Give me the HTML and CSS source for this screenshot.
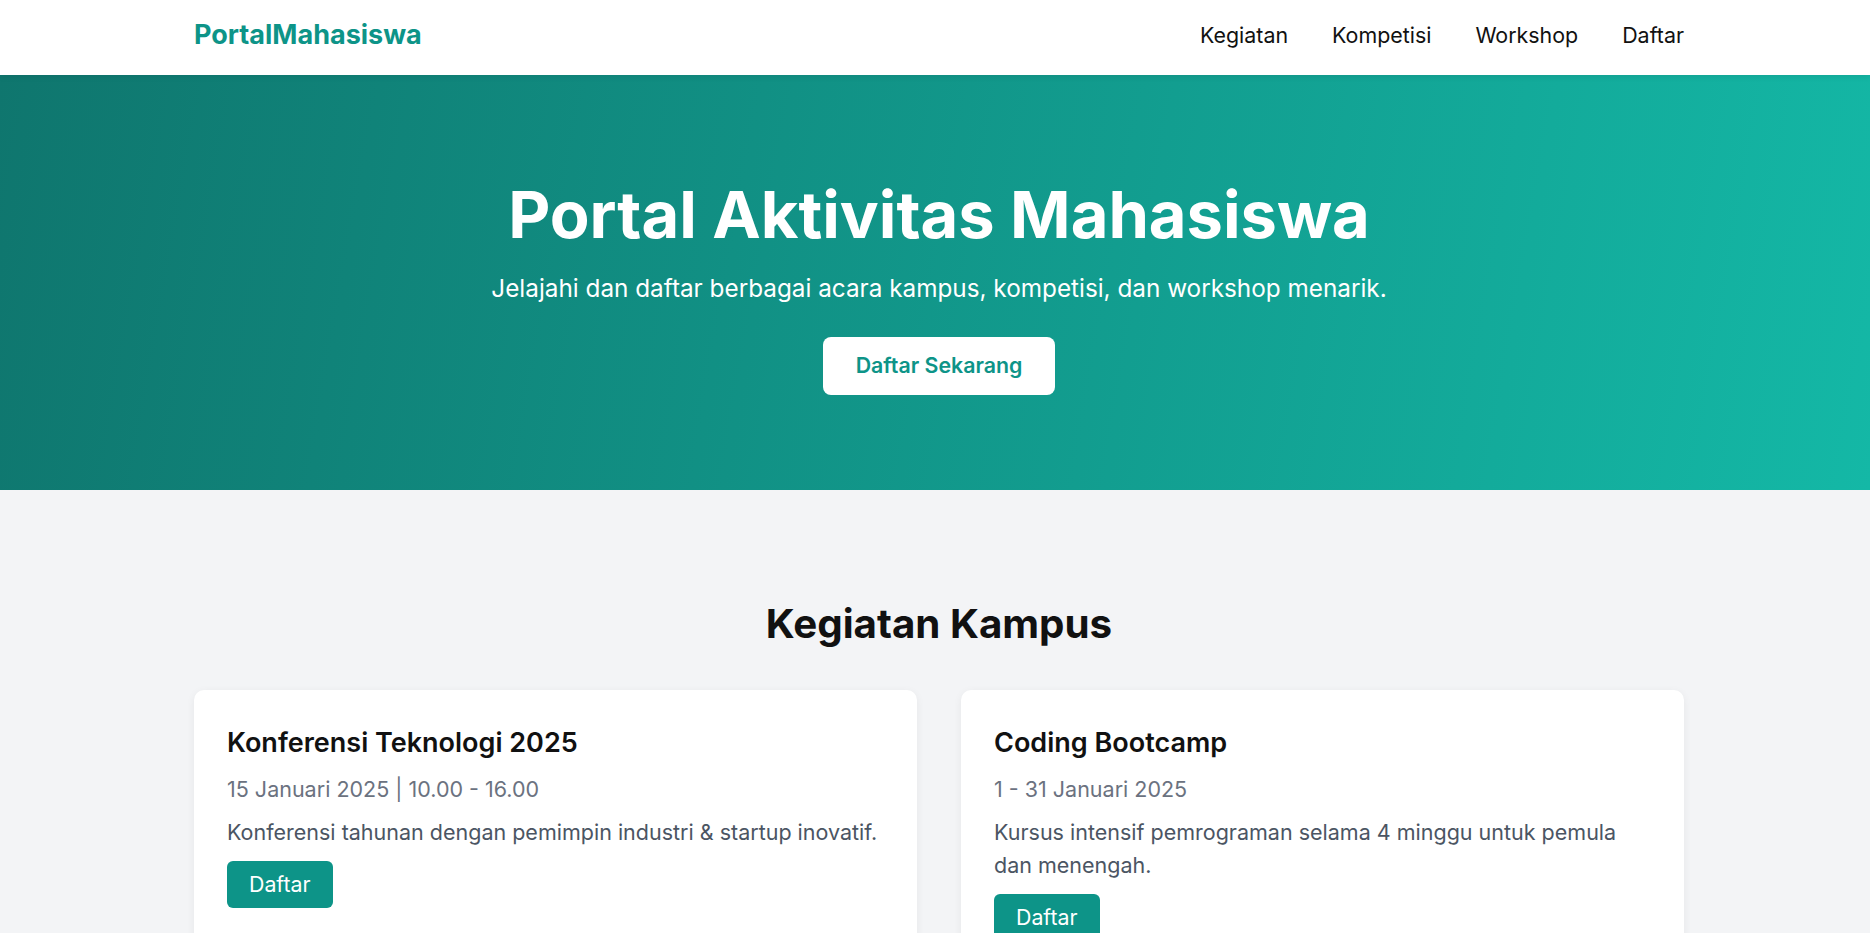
FILE: index.html
```html
<!DOCTYPE html>
<html lang="id">
<head>
<meta charset="utf-8">
<title>Portal Mahasiswa</title>
<link rel="stylesheet" href="styles.css">
</head>
<body>
<header class="navbar">
  <div class="inner nav-inner">
    <a class="logo" href="#">PortalMahasiswa</a>
    <nav class="nav-links">
      <a href="#">Kegiatan</a>
      <a href="#">Kompetisi</a>
      <a href="#">Workshop</a>
      <a href="#">Daftar</a>
    </nav>
  </div>
</header>

<section class="hero">
  <div class="inner hero-inner">
    <h1 class="hero-title">Portal Aktivitas Mahasiswa</h1>
    <p class="hero-sub">Jelajahi dan daftar berbagai acara kampus, kompetisi, dan workshop menarik.</p>
    <a class="hero-btn" href="#">Daftar Sekarang</a>
  </div>
</section>

<main class="section">
  <div class="inner">
    <h2 class="section-title">Kegiatan Kampus</h2>
    <div class="cards">
      <article class="card">
        <h3 class="card-title">Konferensi Teknologi 2025</h3>
        <p class="card-date">15 Januari 2025 | 10.00 - 16.00</p>
        <p class="card-desc">Konferensi tahunan dengan pemimpin industri &amp; startup inovatif.</p>
        <a class="card-btn" href="#">Daftar</a>
      </article>
      <article class="card">
        <h3 class="card-title">Coding Bootcamp</h3>
        <p class="card-date">1 - 31 Januari 2025</p>
        <p class="card-desc">Kursus intensif pemrograman selama 4 minggu untuk pemula dan menengah.</p>
        <a class="card-btn" href="#">Daftar</a>
      </article>
      <article class="card">
        <h3 class="card-title">Seminar Karier</h3>
        <p class="card-date">20 Februari 2025 | 09.00 - 12.00</p>
        <p class="card-desc">Tips dan strategi membangun karier bersama para profesional.</p>
        <a class="card-btn" href="#">Daftar</a>
      </article>
      <article class="card">
        <h3 class="card-title">Hackathon Kampus</h3>
        <p class="card-date">5 - 6 Maret 2025</p>
        <p class="card-desc">Kompetisi 24 jam membangun solusi digital untuk kampus.</p>
        <a class="card-btn" href="#">Daftar</a>
      </article>
    </div>
  </div>
</main>
</body>
</html>
```

FILE: styles.css
```css
* {
  box-sizing: border-box;
}

html, body {
  margin: 0;
  padding: 0;
}

body {
  font-family: Inter, "Noto Sans", "Liberation Sans", sans-serif;
  background: #f3f4f6;
  color: #111111;
}

a {
  text-decoration: none;
}

.inner {
  max-width: 1498px;
  margin: 0 auto;
  padding-left: 8px;
}

/* NAVBAR */
.navbar {
  background: #ffffff;
  height: 75px;
  position: relative;
  z-index: 2;
  box-shadow: 0 2px 6px rgba(0, 0, 0, 0.08);
}

.nav-inner {
  height: 100%;
  display: flex;
  align-items: center;
  justify-content: space-between;
  padding-bottom: 6px;
}

.logo {
  font-size: 27px;
  font-weight: 700;
  color: #0d9488;
  line-height: 40px;
}

.nav-links {
  display: flex;
  gap: 44px;
}

.nav-links a {
  font-size: 21.4px;
  color: #111111;
  line-height: 32px;
}

/* HERO */
.hero {
  background: linear-gradient(100deg, #0f766e 0%, #14b8a6 100%);
  color: #ffffff;
  padding: 101px 0 95px;
}

.hero-inner {
  display: flex;
  flex-direction: column;
  align-items: center;
  text-align: center;
}

.hero-title {
  margin: 0;
  font-size: 65px;
  font-weight: 700;
  line-height: 77px;
}

.hero-sub {
  margin: 19px 0 0;
  font-size: 24.3px;
  line-height: 33px;
}

.hero-btn {
  margin-top: 32px;
  display: inline-block;
  background: #ffffff;
  color: #0d9488;
  font-size: 21.33px;
  font-weight: 600;
  line-height: 33px;
  padding: 12px 33px 13px;
  border-radius: 8px;
}

/* SECTION */
.section {
  padding: 110px 0 60px;
}

.section-title {
  margin: 0 0 42px;
  text-align: center;
  font-size: 40.3px;
  font-weight: 700;
  line-height: 48px;
}

.cards {
  display: grid;
  grid-template-columns: 1fr 1fr;
  gap: 44px;
}

.card {
  background: #ffffff;
  border-radius: 10px;
  padding: 33px;
  box-shadow: 0 2px 8px rgba(0, 0, 0, 0.06);
}

.card-title {
  margin: 0 0 11px;
  font-size: 27px;
  font-weight: 600;
  line-height: 39px;
  color: #111111;
}

.card-date {
  margin: 0 0 10px;
  font-size: 21.5px;
  line-height: 33px;
  color: #6b7280;
}

.card-desc {
  margin: 0 0 12px;
  font-size: 21.5px;
  line-height: 33px;
  color: #4b5563;
}

.card-btn {
  display: inline-block;
  background: #0d9488;
  color: #ffffff;
  font-size: 21.33px;
  line-height: 33px;
  padding: 7px 22px;
  border-radius: 6px;
}
```
